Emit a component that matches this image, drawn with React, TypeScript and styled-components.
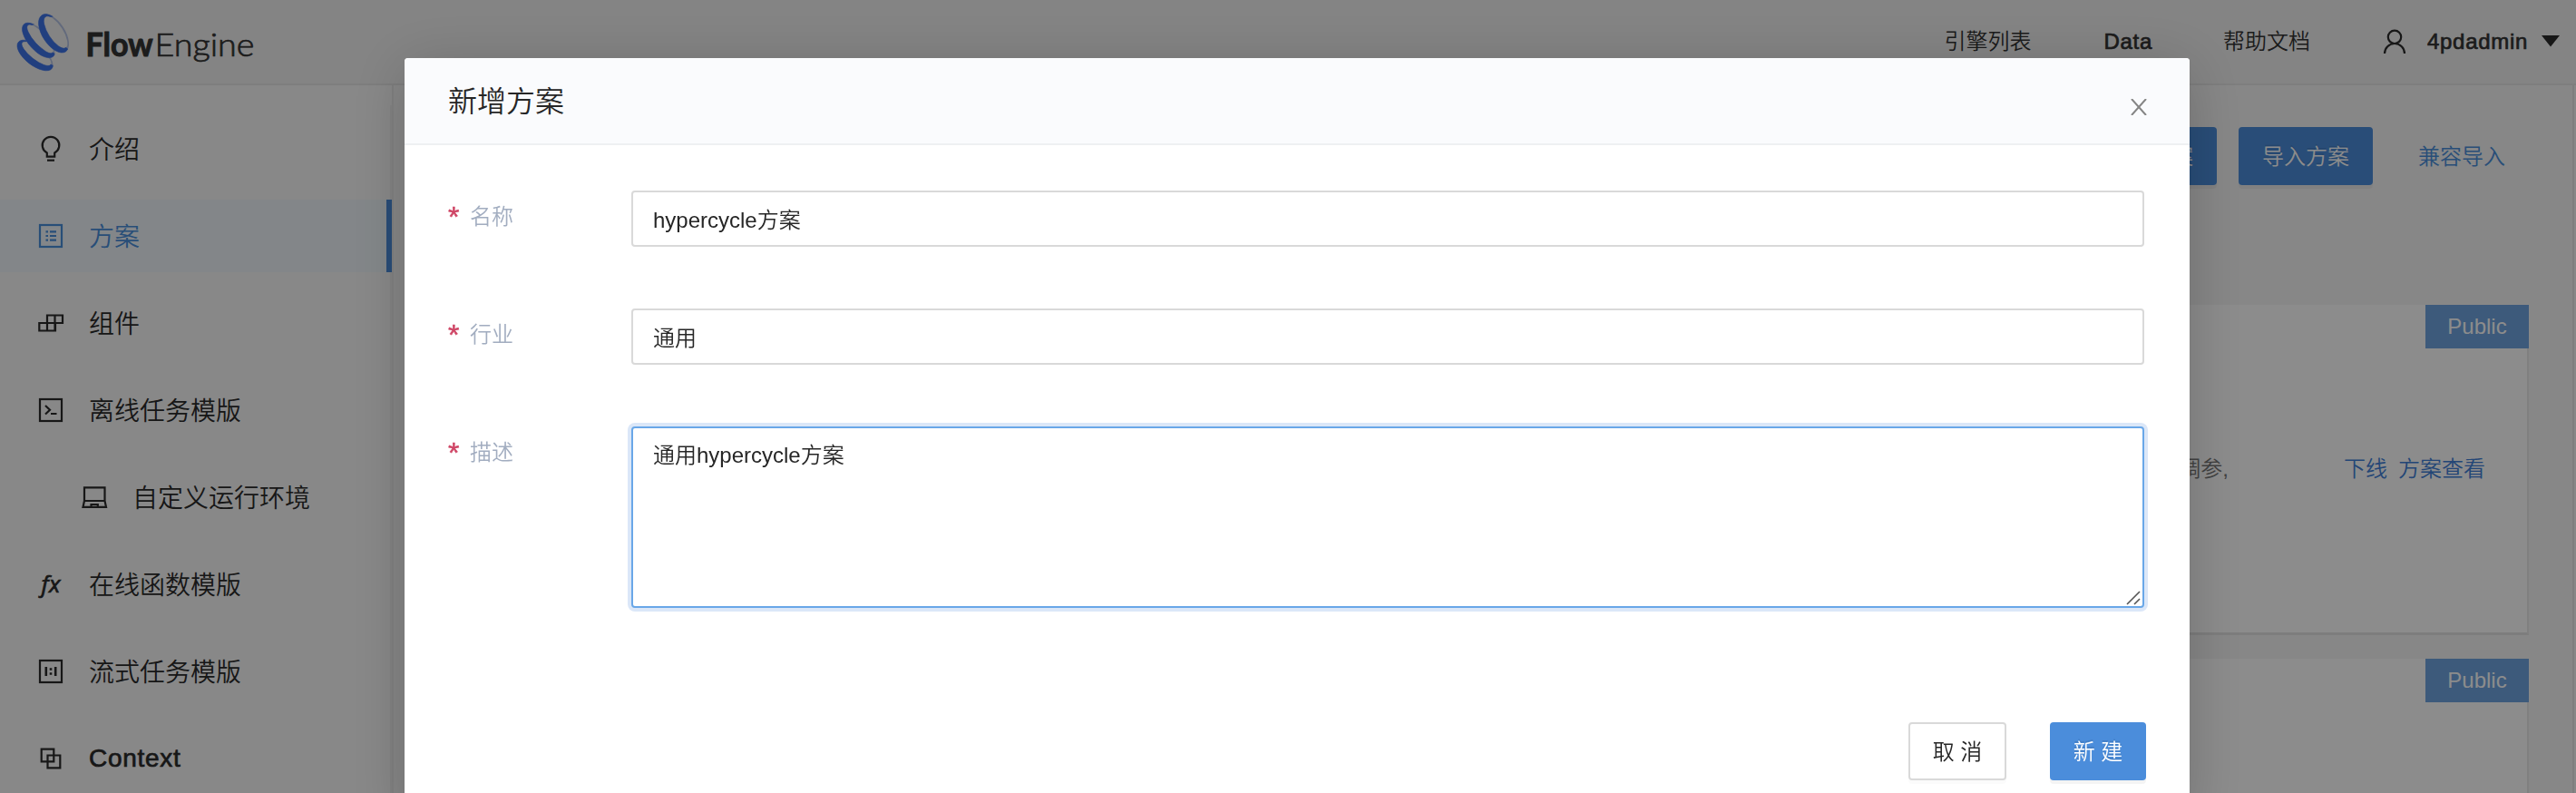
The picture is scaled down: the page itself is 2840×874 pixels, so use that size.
import React from "react";
import styled, { createGlobalStyle, css } from "styled-components";

const sans = `"Liberation Sans", "Noto Sans CJK SC", sans-serif`;

const GlobalStyle = createGlobalStyle`
  * { box-sizing: border-box; }
  html, body { margin: 0; padding: 0; height: 100%; overflow: hidden; }
  body { font-family: ${sans}; font-size: 24px; font-weight: 350; color: #333; background: #f6f6f6; }
`;

const Page = styled.div`
  height: 874px;
  display: flex;
  flex-direction: column;
  overflow: hidden;
`;

const Header = styled.header`
  height: 94px;
  flex: none;
  display: flex;
  align-items: center;
  padding: 0 18px 3px 18px;
  background: #f1f1f1;
  box-shadow: inset 0 -2px 0 #e5e5e5;
`;

const Brand = styled.div`
  display: flex;
  width: 300px;
  height: 90px;
`;

const Nav = styled.nav`
  margin-left: auto;
  display: flex;
  align-items: center;
  white-space: nowrap;
  line-height: 36px;
`;

const NavLink = styled.a<{ $gap: number }>`
  margin-right: ${(p) => p.$gap}px;
`;

const Strong = styled.span`
  font-weight: 400;
  letter-spacing: 0.7px;
  -webkit-text-stroke: 0.7px currentColor;
`;

const User = styled.div`
  display: flex;
  align-items: center;
  svg:first-child { margin-right: 23px; }
  svg:last-child { margin-left: 15px; }
`;

const Body = styled.div`
  flex: 1;
  display: flex;
  min-height: 0;
`;

const Sidebar = styled.aside`
  width: 434px;
  flex: none;
  border-right: 2px solid #e9e9e9;
  background: #f8f8f8;
  padding-top: 22px;
`;

const Menu = styled.ul`
  list-style: none;
  margin: 0;
  padding: 8px 0 0;
  height: 780px;
  border-right: 2px solid #ededed;
  display: flex;
  flex-direction: column;
  gap: 16px;
`;

const MenuItem = styled.li<{ $active?: boolean; $nested?: boolean }>`
  height: 80px;
  flex: none;
  display: flex;
  align-items: center;
  gap: 28px;
  padding-left: ${(p) => (p.$nested ? 90 : 42)}px;
  margin-right: -2px;
  font-size: 28px;
  color: #2b2b2b;
  ${(p) =>
    p.$active &&
    css`
      color: #4a8edb;
      background: #eef5f9;
      border-right: 6px solid #4a8bd8;
    `}
`;

const MenuText = styled.span`
  padding-bottom: 2px;
`;

const Content = styled.main`
  flex: 1;
  border-right: 2px solid #e6e6e6;
  margin-right: 2px;
  padding: 46px 48px 0 46px;
  background: #f6f6f6;
`;

const Actions = styled.div`
  display: flex;
  justify-content: flex-end;
  height: 64px;
  margin-bottom: 132px;
  padding-right: 26px;
`;

const Button = styled.button<{ $kind?: "primary" | "link" | "plain" }>`
  height: 64px;
  padding: 0 0 3px;
  font-family: ${sans};
  font-size: 24px;
  font-weight: 350;
  border-radius: 4px;
  border: 0;
  background: transparent;
  color: #4a8edb;
  ${(p) =>
    p.$kind === "primary" &&
    css`
      background: #4b8ddb;
      color: #fff;
      text-shadow: 0 -2px 0 rgba(0, 0, 0, 0.1);
      box-shadow: 0 4px 0 rgba(0, 0, 0, 0.045);
    `}
  ${(p) =>
    p.$kind === "plain" &&
    css`
      background: #fff;
      color: #262626;
      border: 2px solid #d9d9d9;
      box-shadow: 0 4px 0 rgba(0, 0, 0, 0.016);
    `}
`;

const ImportButton = styled(Button)`
  width: 148px;
  margin-left: 24px;
`;

const CompatButton = styled(Button)`
  width: 96px;
  margin-left: 50px;
`;

const Card = styled.section`
  height: 364px;
  margin-bottom: 26px;
  background: #fff;
  border-right: 2px solid #eaeaea;
  border-bottom: 3px solid #e4e4e4;
  display: flex;
  flex-direction: column;
`;

const Tag = styled.div`
  align-self: flex-end;
  margin-right: -2px;
  width: 114px;
  height: 48px;
  line-height: 47px;
  text-align: center;
  background: #6fa4e1;
  color: #fff;
`;

const CardRow = styled.div`
  display: flex;
  justify-content: flex-end;
  margin-top: 115px;
  padding-right: 46px;
  line-height: 36px;
  a { color: #4080d8; margin-left: 12px; }
`;

const Summary = styled.span`
  color: #777;
  margin-right: 115px;
`;

const Mask = styled.div`
  position: fixed;
  inset: 0;
  background: rgba(0, 0, 0, 0.45);
  display: flex;
  justify-content: center;
  align-items: flex-start;
  padding: 64px 0 0 20px;
`;

const Modal = styled.div`
  width: 1968px;
  height: 840px;
  flex: none;
  border-radius: 4px 4px 0 0;
  background: #fff;
  box-shadow: 0 8px 64px rgba(0, 0, 0, 0.2);
  overflow: hidden;
`;

const ModalHeader = styled.div`
  height: 96px;
  display: flex;
  justify-content: space-between;
  padding: 0 47px 0 48px;
  background: #fafbfd;
  border-bottom: 2px solid #eef0f2;
`;

const ModalTitle = styled.h2`
  margin: 0;
  font-size: 32px;
  font-weight: 350;
  line-height: 96px;
  color: #262626;
`;

const CloseIcon = styled.svg`
  margin-top: 45px;
`;

const Form = styled.form`
  padding: 50px 50px 0 48px;
`;

const Field = styled.div`
  display: flex;
  margin-bottom: 68px;
`;

const Label = styled.label`
  width: 202px;
  line-height: 58px;
  display: flex;
  color: #a2adc0;
`;

const Required = styled.span`
  width: 24px;
  font-size: 32px;
  font-weight: 400;
  color: #cf4565;
  -webkit-text-stroke: 0.5px currentColor;
`;

const control = css`
  width: 1668px;
  border: 2px solid #d9d9d9;
  border-radius: 4px;
  background: #fff;
  font-family: ${sans};
  font-size: 24px;
  font-weight: 350;
  color: #262626;
  outline: none;
`;

const Input = styled.input`
  ${control}
  height: 62px;
  padding: 0 22px 2px;
`;

const AreaWrap = styled.div`
  position: relative;
  height: 200px;
`;

const TextArea = styled.textarea`
  ${control}
  height: 200px;
  display: block;
  padding: 12px 22px;
  line-height: 36px;
  resize: none;
  border-color: #69a7e8;
  box-shadow: 0 0 0 4px #dbe7f8;
`;

const Grip = styled.svg`
  position: absolute;
  right: 4px;
  bottom: 3px;
`;

const Footer = styled.div`
  display: flex;
  justify-content: flex-end;
  gap: 48px;
  padding: 58px 48px 0 0;
`;

const FooterButton = styled(Button)<{ $w: number }>`
  width: ${(p) => p.$w}px;
`;

function Ring({ id, x, y, angle, a, b }: { id: string; x: number; y: number; angle: number; a: number; b: number }) {
  const ia = a - 3.6;
  const ib = b - 4.4;
  const d =
    `M${-a} 0A${a} ${b} 0 1 1 ${a} 0A${a} ${b} 0 1 1 ${-a} 0Z` +
    `M${-ia} -2.4A${ia} ${ib} 0 1 1 ${ia} -2.4A${ia} ${ib} 0 1 1 ${-ia} -2.4Z`;
  return (
    <g transform={`translate(${x} ${y}) rotate(${angle})`} fillRule="evenodd">
      <clipPath id={id}>
        <path d={`M-30 -14L${-a * 0.6} -14L${-a * 0.75} -3L${a * 0.85} -3L30 -6V30H-30Z`} />
      </clipPath>
      <path d={d} fill="#b4c2e2" />
      <path d={d} fill="#3d73e8" stroke="#3d73e8" strokeWidth="0.5" clipPath={`url(#${id})`} />
    </g>
  );
}

function Logo() {
  return (
    <svg width="300" height="90" viewBox="18 0 300 90">
      <Ring id="r3" x={38.7} y={60} angle={38} a={23.5} b={11} />
      <Ring id="r2" x={42.5} y={43.5} angle={48} a={24} b={11} />
      <Ring id="r1" x={59.3} y={35.8} angle={57} a={24} b={12.5} />
      <text x="94.5" y="61" fontFamily="Lato, sans-serif" fontWeight="700" fontSize="36" fill="#333" stroke="#333" strokeWidth="1" textLength="74" lengthAdjust="spacingAndGlyphs">Flow</text>
      <text x="170.5" y="61" fontFamily="Lato, sans-serif" fontWeight="300" fontSize="36" fill="#333" stroke="#333" strokeWidth="0.7" textLength="110" lengthAdjust="spacingAndGlyphs">Engine</text>
    </svg>
  );
}

const paths: Record<string, React.ReactNode> = {
  bulb: (
    <>
      <path d="M9.8 22.6V18.4A9.3 9.3 0 1 1 18.2 18.4V22.6Z" />
      <path d="M10 26.7H18" />
    </>
  ),
  list: (
    <>
      <rect x="2" y="2" width="24" height="24" />
      <path d="M8.5 9.3h2.5M13 9.3h7M8.5 14h2.5M13 14h7M8.5 18.6h2.5M13 18.6h7" />
    </>
  ),
  blocks: (
    <path d="M10 5.5H27V14H10ZM1.3 14H19V22.5H1.3ZM18.5 5.5V22.5M10 5.5V22.5" />
  ),
  terminal: (
    <>
      <rect x="2" y="2" width="24" height="24" />
      <path d="M8 9L13 13.8L8 18.5M14 18H20.5" />
    </>
  ),
  laptop: (
    <path d="M3 3.3H25.5V18H3ZM3 18L1.5 24.8H27L25.5 18M10.5 24.5V22H17.8V24.5" />
  ),
  fx: (
    <text x="3.5" y="22.5" fontFamily="'Open Sans', sans-serif" fontStyle="italic" fontWeight="400" fontSize="26" fill="currentColor" strokeWidth="0.7" textLength="21">fx</text>
  ),
  ratio: (
    <>
      <rect x="2" y="2" width="24" height="24" />
      <path d="M8.8 9V19M19.2 9V19M14 10.2V12.8M14 15.2V17.8" strokeWidth="2.6" />
    </>
  ),
  overlap: (
    <path d="M3.7 3.7H17.3V17.3H3.7ZM10.5 10.5H24.3V24.3H10.5Z" />
  ),
};

function Icon({ name }: { name: string }) {
  return (
    <svg width="28" height="28" viewBox="0 0 28 28" fill="none" stroke="currentColor" strokeWidth="2.2" overflow="visible">
      {paths[name]}
    </svg>
  );
}

const items = [
  { icon: "bulb", text: "介绍" },
  { icon: "list", text: "方案", active: true },
  { icon: "blocks", text: "组件" },
  { icon: "terminal", text: "离线任务模版" },
  { icon: "laptop", text: "自定义运行环境", nested: true },
  { icon: "fx", text: "在线函数模版" },
  { icon: "ratio", text: "流式任务模版" },
  { icon: "overlap", text: "Context", strong: true },
];

export default function App() {
  return (
    <>
      <GlobalStyle />
      <Page>
        <Header>
          <Brand><Logo /></Brand>
          <Nav>
            <NavLink $gap={80}>引擎列表</NavLink>
            <NavLink $gap={78}><Strong>Data</Strong></NavLink>
            <NavLink $gap={80}>帮助文档</NavLink>
            <User>
              <svg width="26" height="28" viewBox="0 0 26 28" fill="none" stroke="#2b2b2b" strokeWidth="2.2">
                <circle cx="13" cy="8.8" r="7.2" />
                <path d="M2 27A11 11 0 0 1 24 27" />
              </svg>
              <Strong>4pdadmin</Strong>
              <svg width="20" height="14" viewBox="0 0 20 14"><path d="M0 0H20L10 12.5Z" fill="#2b2b2b" /></svg>
            </User>
          </Nav>
        </Header>
        <Body>
          <Sidebar>
            <Menu>
              {items.map((it) => (
                <MenuItem key={it.text} $active={it.active} $nested={it.nested}>
                  <Icon name={it.icon} />
                  {it.strong ? <Strong>{it.text}</Strong> : <MenuText>{it.text}</MenuText>}
                </MenuItem>
              ))}
            </Menu>
          </Sidebar>
          <Content>
            <Actions>
              <ImportButton $kind="primary">新增方案</ImportButton>
              <ImportButton $kind="primary">导入方案</ImportButton>
              <CompatButton $kind="link">兼容导入</CompatButton>
            </Actions>
            <Card>
              <Tag>Public</Tag>
              <CardRow>
                <Summary>自动调参,</Summary>
                <a>下线</a>
                <a>方案查看</a>
              </CardRow>
            </Card>
            <Card>
              <Tag>Public</Tag>
            </Card>
          </Content>
        </Body>
      </Page>
      <Mask>
        <Modal>
          <ModalHeader>
            <ModalTitle>新增方案</ModalTitle>
            <CloseIcon width="18" height="18" viewBox="0 0 18 18" fill="none" stroke="#858585" strokeWidth="2">
              <path d="M1 0L17 18M17 0L1 18" />
            </CloseIcon>
          </ModalHeader>
          <Form>
            <Field>
              <Label><Required>*</Required>名称</Label>
              <Input defaultValue="hypercycle方案" />
            </Field>
            <Field>
              <Label><Required>*</Required>行业</Label>
              <Input defaultValue="通用" />
            </Field>
            <Field>
              <Label><Required>*</Required>描述</Label>
              <AreaWrap>
                <TextArea defaultValue="通用hypercycle方案" />
                <Grip width="16" height="16" viewBox="0 0 16 16" stroke="#555" strokeWidth="1.6">
                  <path d="M1 15L15 1M9 15L15 9" />
                </Grip>
              </AreaWrap>
            </Field>
          </Form>
          <Footer>
            <FooterButton $kind="plain" $w={108}>取 消</FooterButton>
            <FooterButton $kind="primary" $w={106}>新 建</FooterButton>
          </Footer>
        </Modal>
      </Mask>
    </>
  );
}
